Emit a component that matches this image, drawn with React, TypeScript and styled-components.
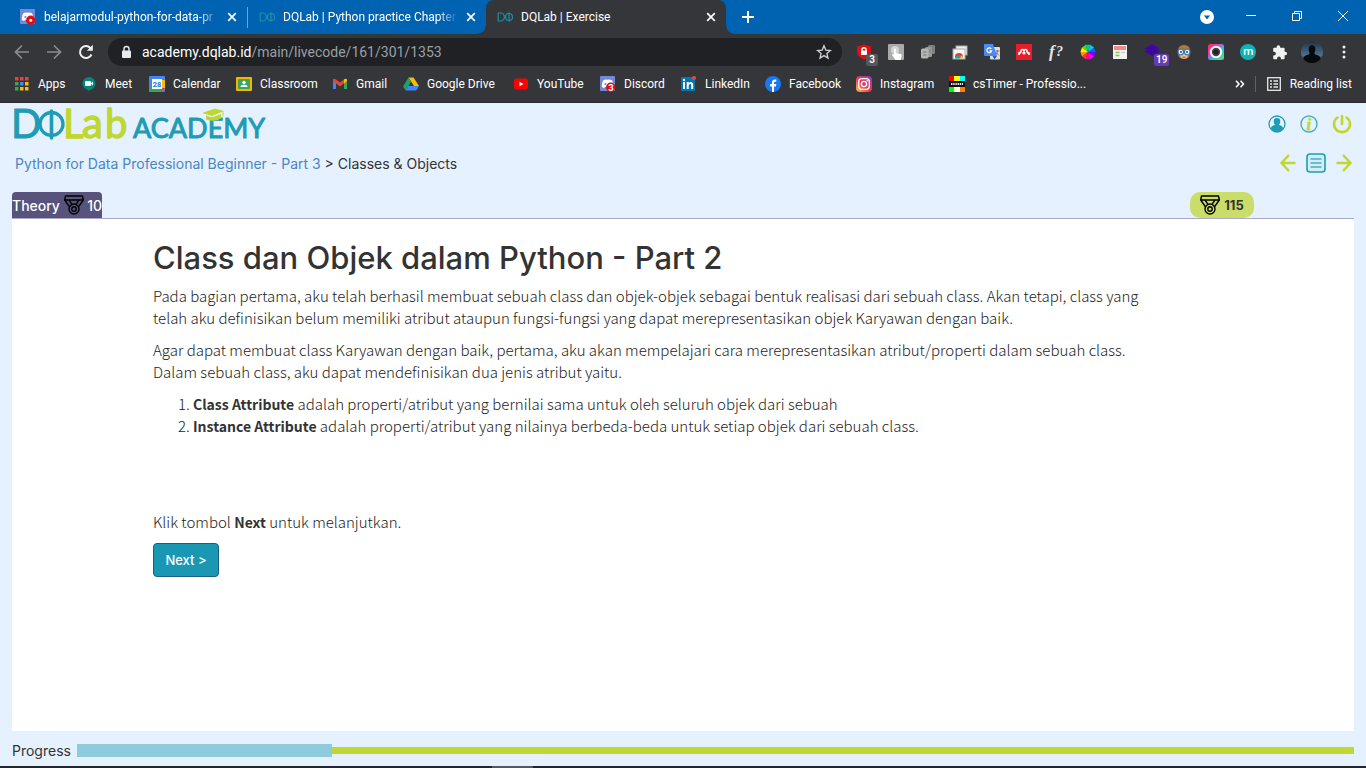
import React from "react";
import styled, { createGlobalStyle, css } from "styled-components";

const ui = `Roboto, "Open Sans", sans-serif`;
const display = `Inter, "Open Sans", sans-serif`;
const reading = `"Noto Sans CJK JP", "Noto Sans", sans-serif`;
const teal = "#1f9cb5";
const lime = "#c0d731";

const GlobalStyle = createGlobalStyle`
  *, *::before, *::after { box-sizing: border-box; }
  body { margin: 0; background: #e5f1ff; color: #333; font-family: ${display}; }
  button { font: inherit; color: inherit; background: none; border: 0; padding: 0; cursor: pointer; }
  a { color: inherit; text-decoration: none; }
  svg { display: block; flex: none; overflow: visible; }
`;

const Screen = styled.div`
  min-height: 100vh;
  display: flex;
  flex-direction: column;
`;

/* ---------- browser window ---------- */

const Browser = styled.header`
  background: #35363a;
  border-bottom: 1px solid #29292c;
  color: #fff;
  font-family: ${ui};
  font-size: 12px;
`;

const TabStrip = styled.div`
  height: 34px;
  display: flex;
  align-items: stretch;
  background: #0063b1;
`;

const Tab = styled.div<{ $active?: boolean; $first?: boolean }>`
  position: relative;
  flex: 0 1 ${(p) => (p.$first ? 248 : p.$active ? 240 : 238)}px;
  min-width: 0;
  display: flex;
  align-items: center;
  gap: 8px;
  padding: 0 10px 0 ${(p) => (p.$first ? 20 : 11)}px;
  ${(p) => p.$first && css`border-right: 1px solid transparent;
    border-image: linear-gradient(transparent 22%, #6ba4d2 22%, #6ba4d2 80%, transparent 80%) 1;`}
  ${(p) => p.$active && css`
    background: #35363a;
    border-radius: 8px 8px 0 0;
    &::before, &::after {
      content: "";
      position: absolute;
      bottom: 0;
      width: 8px;
      height: 8px;
    }
    &::before { left: -8px; background: radial-gradient(circle at 0 0, transparent 7px, #35363a 8px); }
    &::after { right: -8px; background: radial-gradient(circle at 100% 0, transparent 7px, #35363a 8px); }
  `}
`;

const TabTitle = styled.span<{ $fade?: boolean }>`
  flex: 1;
  min-width: 0;
  overflow: hidden;
  white-space: nowrap;
  ${(p) => p.$fade && css`mask-image: linear-gradient(to right, #000 88%, transparent);`}
`;

const IconButton = styled.button<{ $w?: number }>`
  flex: none;
  width: ${(p) => (p.$w ? `${p.$w}px` : "auto")};
  display: flex;
  align-items: center;
  justify-content: center;
`;

const WindowControls = styled.div`
  margin-left: auto;
  display: flex;
`;

const Toolbar = styled.div`
  height: 36px;
  display: flex;
  align-items: center;
  padding: 0 6px;
`;

const Address = styled.div`
  flex: 1;
  min-width: 0;
  height: 28px;
  margin: 0 6px;
  padding: 0 10px 0 12px;
  display: flex;
  align-items: center;
  gap: 10px;
  border-radius: 14px;
  background: #202124;
  font-size: 14px;
`;

const Url = styled.span`
  flex: 1;
  color: #9aa0a6;
  white-space: nowrap;
  overflow: hidden;
  b { font-weight: 400; color: #fff; }
`;

const Extension = styled(IconButton)`
  position: relative;
  width: 32px;
  height: 32px;
`;

const Count = styled.span<{ $bg: string }>`
  position: absolute;
  left: 18px;
  top: 18px;
  min-width: 12px;
  padding: 0 2px;
  border-radius: 2px;
  background: ${(p) => p.$bg};
  font-size: 10px;
  line-height: 12px;
  font-weight: 600;
`;

const Bookmarks = styled.nav`
  height: 32px;
  display: flex;
  align-items: center;
  padding: 0 14px 4px;
`;

const Bookmark = styled.a<{ $w: number }>`
  flex: 0 0 ${(p) => p.$w}px;
  display: flex;
  align-items: center;
  gap: 8px;
  white-space: nowrap;
`;

const BookmarkEnd = styled.div`
  margin-left: auto;
  display: flex;
  align-items: center;
  gap: 10px;
`;

const Divider = styled.span`
  width: 1px;
  height: 16px;
  background: #5f6165;
`;

const ListButton = styled(IconButton)`
  gap: 8px;
`;

/* ---------- page ---------- */

const Page = styled.div`
  flex: 1;
  display: flex;
  flex-direction: column;
  padding: 0 12px;
`;

const Row = styled.div<{ $h: number }>`
  height: ${(p) => p.$h}px;
  padding: 0 2px 0 3px;
  display: flex;
  align-items: center;
  justify-content: space-between;
`;

const Actions = styled.div<{ $gap: number }>`
  display: flex;
  align-items: center;
  gap: ${(p) => p.$gap}px;
`;

const Breadcrumb = styled.nav`
  font-size: 14px;
  font-weight: 400;
  color: #333;
  a { color: #4a86bf; }
`;

const TabsRow = styled.div`
  margin-top: 11px;
  height: 26px;
  display: flex;
  justify-content: space-between;
  padding-right: 100px;
`;

const TheoryTab = styled.button`
  width: 90px;
  display: flex;
  align-items: center;
  justify-content: space-between;
  border-radius: 4px 4px 0 0;
  background: #57537c;
  color: #fff;
  font-size: 14px;
  font-weight: 500;
`;

const Score = styled.div`
  width: 64px;
  display: flex;
  align-items: center;
  justify-content: center;
  gap: 4px;
  border-radius: 10px;
  background: #cbdd69;
  font-size: 13px;
  font-weight: 700;
`;

const Panel = styled.main`
  flex: 1;
  border-top: 1px solid #abaaca;
  background: #fff;
  padding: 22px 60px 40px 141px;
`;

const Article = styled.article`
  max-width: 1000px;
  color: #1c1c1c;
  font-family: ${reading};
  font-size: 15px;
  font-weight: 300;
  line-height: 22px;
  p, ol { margin: 0 0 10px; }
  ol { padding-left: 40px; margin-bottom: 74px; }
  b { font-size: 14px; font-weight: 700; color: #333; }
`;

const Title = styled.h1`
  margin: 0 0 10px;
  color: #333;
  font-family: ${display};
  font-size: 31px;
  line-height: 34px;
  font-weight: 500;
`;

const NextButton = styled.button`
  width: 66px;
  height: 34px;
  border: 1px solid #1d5c85;
  border-radius: 4px;
  background: #1a98b3;
  color: #fff;
  font-family: ${display};
  font-size: 13px;
  font-weight: 500;
`;

const Footer = styled.footer`
  height: 35px;
  padding-top: 4px;
  display: flex;
  align-items: center;
  gap: 5px;
  font-size: 14px;
`;

const ProgressLabel = styled.span`
  width: 60px;
`;

const Track = styled.div`
  flex: 1;
  height: 13px;
  background: linear-gradient(${lime}, ${lime}) center / 100% 7px no-repeat;
`;

const Fill = styled.div`
  height: 100%;
  background: #8ecbdc;
`;

const Taskbar = styled.div`
  height: 2px;
  background: linear-gradient(to right, #23262d 36%, #56585e 36%, #56585e 39%, #23262d 39%);
`;

/* ---------- drawings ---------- */

const Svg = ({ w = 16, h = w, vb = `0 0 ${w} ${h}`, children }: { w?: number; h?: number; vb?: string; children: React.ReactNode }) => (
  <svg width={w} height={h} viewBox={vb} fill="none" aria-hidden="true">{children}</svg>
);

const Close = () => (
  <Svg w={10}><path d="M1.2 1.2l7.6 7.6M8.8 1.2L1.2 8.8" stroke="#fff" strokeWidth="1.7" /></Svg>
);

const DiscordIcon = ({ count }: { count?: string }) => (
  <Svg>
    <rect x="0" y="0" width="15" height="15" rx="1" fill="#7289da" />
    <path d="M3 4.6Q5 3.2 7.2 3.7Q10 3 12.2 4.6Q13.8 8 13 11.2L10.5 12L9.5 11H5L4 12L1.8 11Q1.7 7.2 3 4.6z" fill="#fff" />
    <circle cx="5.4" cy="8" r="1.1" fill="#7289da" />
    <circle cx="10.7" cy="11.3" r="4.7" fill="#e00c14" />
    {count ? <text x="8.2" y="14.8" fontSize="9.5" fontWeight="700" fill="#fff" fontFamily="Roboto">{count}</text> : <circle cx="10.7" cy="11.3" r="1.5" fill="#fff" />}
  </Svg>
);

const LabFavicon = () => (
  <Svg>
    <path d="M1.2 4h2.2a4 4 0 0 1 0 8H1.2z" stroke="#1f8fa5" strokeWidth="1.2" />
    <circle cx="12" cy="8" r="3.5" stroke="#1f8fa5" strokeWidth="1.2" />
    <path d="M12 3.5v9" stroke="#1f8fa5" strokeWidth="1.2" />
  </Svg>
);

const Logo = () => (
  <svg width="252" height="36" viewBox="0 0 252 36" role="img" aria-label="DQLab Academy">
    <g fontFamily="Lato, sans-serif" fontSize="40" strokeLinejoin="round">
      <text x="-4" y="32" fill={teal} stroke={teal} strokeWidth="1">D</text>
      <text x="48" y="32" fill={lime} stroke={lime} strokeWidth="1.300">L</text>
      <text x="67" y="32" fill={lime} stroke={lime} strokeWidth="1.300" fontSize="42">a</text>
      <text x="90" y="32" fill={lime} stroke={lime} strokeWidth="1.300">b</text>
      <text x="118" y="32" fill={teal} stroke={teal} strokeWidth="1" fontSize="27">ACADEMY</text>
    </g>
    <circle cx="36.500" cy="18" r="11.500" fill="none" stroke={teal} strokeWidth="3.300" />
    <path d="M36.500 5v27" stroke={teal} strokeWidth="3.600" strokeLinecap="round" />
    <path d="M187 7l13-4.500 9 2.500-12 5z" fill={lime} />
    <path d="M191 9.500l6 2 9-3.500v4.500q-7 4-15 1z" fill={lime} />
    <path d="M208 5.500v5" stroke={lime} />
  </svg>
);

const Medal = () => (
  <Svg w={20}>
    <g stroke="#000" strokeWidth="1.4" strokeLinejoin="round">
      <path d="M1.500 1h17L19.300 5H.7z" />
      <path d="M.7 5l4.600 6.500M19.300 5l-4.600 6.500M5 5l3 4.300M15 5l-3 4.300" />
      <circle cx="10" cy="14" r="5" />
      <circle cx="10" cy="14" r="2.200" />
    </g>
  </Svg>
);

const bookmarks: { name: string; w: number; icon: React.ReactNode }[] = [
  { name: "Apps", w: 67, icon: <Svg>{[1, 6, 11].map((y, r) => [1, 6, 11].map((x, c) => <rect key={`${x}${y}`} x={x} y={y} width="3.500" height="3.500" fill={[["#ea4335", "#ea4335", "#ea4335"], ["#34a853", "#4285f4", "#fbbc05"], ["#34a853", "#fbbc05", "#fbbc05"]][r][c]} />))}</Svg> },
  { name: "Meet", w: 68, icon: <Svg><circle cx="8" cy="7.500" r="6.500" fill="#00897b" /><path d="M6 13l2.500 2.500V13z" fill="#00897b" /><rect x="4" y="5" width="6" height="5" rx="1" fill="#fff" /><path d="M9.500 7.500L12 5.500v4z" fill="#fff" /></Svg> },
  { name: "Calendar", w: 87, icon: <Svg><rect width="16" height="16" rx="1" fill="#4285f4" /><path d="M12 4h4v8h-4z" fill="#fbbc04" /><path d="M0 12h12v4H1a1 1 0 0 1-1-1z" fill="#34a853" /><path d="M12 12h4l-4 4z" fill="#ea4335" /><path d="M3 3h10v10H3z" fill="#fff" /><text x="3.800" y="11" fontSize="7.500" fontWeight="700" fill="#1a73e8" fontFamily="Roboto">28</text></Svg> },
  { name: "Classroom", w: 96, icon: <Svg><rect y="1" width="16" height="14" rx="1" fill="#f4b400" /><rect x="2" y="3" width="12" height="10" fill="#3fa45b" /><circle cx="8" cy="6.500" r="1.700" fill="#fff" /><path d="M4.500 11q0-2.300 3.500-2.300t3.500 2.300z" fill="#fff" /></Svg> },
  { name: "Gmail", w: 71, icon: <Svg><path d="M1 13V4l3 2.500V13z" fill="#4285f4" /><path d="M12 13V6.500L15 4v9z" fill="#34a853" /><path d="M1 5V3.500q1-1.500 2.700-.3L8 6.500l4.300-3.300Q14 2 15 3.500V5l-7 5.500z" fill="#ea4335" /><path d="M12 3.400q2-1.400 3 .1V5l-3 2.400z" fill="#fbbc04" /></Svg> },
  { name: "Google Drive", w: 110, icon: <Svg><path d="M5.500 1.500h5L16 10h-5z" fill="#fbbc04" /><path d="M5.500 1.500L8 5.800 2.800 14.500 0 10.500z" fill="#1ea362" /><path d="M5.300 10H16l-2.700 4.500H2.700z" fill="#4285f4" /></Svg> },
  { name: "YouTube", w: 87, icon: <Svg><rect x="1" y="2.500" width="14" height="11" rx="2.500" fill="#f00" /><path d="M6.500 5.700v4.600l4-2.300z" fill="#fff" /></Svg> },
  { name: "Discord", w: 81, icon: <DiscordIcon count="3" /> },
  { name: "LinkedIn", w: 84, icon: <Svg><rect y="1" width="14" height="14" fill="#0077b5" /><path d="M2 6h2v7H2zM5.700 6h2v1q2-2 4 0 .5.600.5 2v4h-2V9q-.5-2-2.500 0v4h-2z" fill="#fff" /><circle cx="3" cy="4" r="1.200" fill="#fff" /><circle cx="13" cy="2" r="2" fill="#e8483f" /></Svg> },
  { name: "Facebook", w: 91, icon: <Svg><circle cx="8" cy="8" r="8" fill="#1877f2" /><path d="M7 16v-5.500H5V8h2V6.500Q7 3.500 10 3.500h1.300v2.200H10Q9 5.700 9 7v1h2.300l-.4 2.500H9V16z" fill="#fff" /></Svg> },
  { name: "Instagram", w: 93, icon: <Svg><defs><linearGradient id="insta" x1="0" y1="1" x2="1" y2="0"><stop offset="0" stopColor="#ffc24b" /><stop offset=".45" stopColor="#ee3a4e" /><stop offset="1" stopColor="#8a3ac8" /></linearGradient></defs><rect width="16" height="16" rx="4" fill="url(#insta)" /><rect x="2.700" y="2.700" width="10.600" height="10.600" rx="3" stroke="#fff" strokeWidth="1.300" /><circle cx="8" cy="8" r="2.600" stroke="#fff" strokeWidth="1.300" /><circle cx="11.200" cy="4.800" r=".8" fill="#fff" /></Svg> },
  { name: "csTimer - Professio...", w: 136, icon: <Svg><path d="M0 0h5v5H0z" fill="red" /><path d="M5 0h6v5H5z" fill="#ff0" /><path d="M11 0h5v5h-5z" fill="#0ff" /><path d="M0 5h16v6H0z" fill="#111" /><path d="M2 8h12" stroke="#ddd" strokeWidth="2" strokeDasharray="1.500 .7" /><path d="M0 11h5v5H0z" fill="#0f0" /><path d="M5 11h6v5H5z" fill="#ffffd8" /><path d="M11 11h5v5h-5z" fill="#ff7f00" /></Svg> },
];

const wheel = ["#06f", "#0cf", "#0c8", "#4d2", "#fe0", "#f90", "#f33", "#f08", "#f0f", "#70f"];

const extensions: { name: string; icon: React.ReactNode; count?: string; bg?: string }[] = [
  { name: "Ad blocker", count: "3", bg: "#55575b", icon: <Svg><path d="M1 2.200Q5 2 8 .5q3 1.500 7 1.700v5q0 5.800-7 8.300-7-2.500-7-8.300z" fill="#e01010" /><rect x="5" y="6.500" width="6" height="4.500" fill="#fff" /><path d="M6 7V5q2-2.500 4 0v2" stroke="#fff" strokeWidth="1.300" /></Svg> },
  { name: "Touch", icon: <Svg><rect width="16" height="16" rx="1" fill="#aaa" /><circle cx="7" cy="6" r="4" fill="#d5d5d5" /><path d="M6 5q1-1.500 2 0v4l5 1q1 .5.500 3l-1 3H7.500L4 11q0-1.500 2-.5z" fill="#fff" /></Svg> },
  { name: "Copy", icon: <Svg><rect x="8" y="1" width="7" height="9" rx="1.500" fill="#808080" /><rect x="5" y="3" width="7" height="10" rx="1.500" fill="#999" /><rect x="1" y="4.500" width="7.500" height="10" rx="1.500" fill="#b5b5b5" /><path d="M3 8h3.500M3 11h3.500M10 5.500v3M12.500 3v4" stroke="#777" /></Svg> },
  { name: "Windows", icon: <Svg><rect x="4" y="2" width="11" height="9" fill="#eee" stroke="#aaa" /><rect x="1" y="5" width="12" height="10" fill="#f7f7f7" stroke="#aaa" /><path d="M3 13a4 4 0 0 1 8 0z" fill="#e33b2e" /><path d="M3 14.500q0-3 2.500-3L7 14.500z" fill="#36a852" /><path d="M11 14.500q0-3-2-3L7 14.500z" fill="#fbc116" /><circle cx="7" cy="12.800" r="1.700" fill="#4285f4" /></Svg> },
  { name: "Translate", icon: <Svg><rect x="6" y="3" width="10" height="12.500" rx="1" fill="#ddd" /><path d="M0 0h9l4 12H1a1 1 0 0 1-1-1z" fill="#4a8af4" /><path d="M8.500 12h4.500l-2.500 3.500z" fill="#2f5fc0" /><path d="M7.200 4.800a2.400 2.400 0 1 0 .4 2H5.500" stroke="#fff" strokeWidth="1.200" /><path d="M11.500 7h4M13.500 6v1q0 2.500-2 4M12 8.500l3 3" stroke="#777" /></Svg> },
  { name: "Mendeley", icon: <Svg><rect width="16" height="16" fill="#e81c2a" /><path d="M3 11V9q2 0 2-2 0-1.500 1.500-1.500T8 7.500Q8 5.500 9.500 5.500T11 7q0 2 2 2v2" stroke="#fff" strokeWidth="1.700" /><circle cx="8" cy="9" r="1.600" fill="#fff" /></Svg> },
  { name: "Fonts", icon: <Svg w={18} h={18}><g fontStyle="italic" fontWeight="700" fill="#e4e4e4" fontFamily="Liberation Serif"><text x="2" y="14" fontSize="17">f</text><text x="9" y="13" fontSize="14">?</text></g></Svg> },
  { name: "Colours", icon: <Svg>{wheel.map((c, i) => { const a = (i * Math.PI) / 5, b = ((i + 1) * Math.PI) / 5; return <path key={c} fill={c} d={`M8 8L${8 + 7.5 * Math.cos(a)} ${8 - 7.5 * Math.sin(a)}L${8 + 7.5 * Math.cos(b)} ${8 - 7.5 * Math.sin(b)}z`} />; })}</Svg> },
  { name: "Reader", icon: <Svg><rect x="1" y="1" width="14" height="14" fill="#f2f2f2" /><rect x="2" y="2" width="12" height="4" fill="#f08a86" /><path d="M3.500 8.500h4M3.500 11.500h4" stroke="#8cc152" strokeWidth="1.300" /><path d="M9 8.500h4" stroke="#ccc" strokeWidth="1.300" /></Svg> },
  { name: "Layers", count: "19", bg: "#673ab7", icon: <Svg><path d="M8 0l7.500 4.500L8 9 .5 4.500z" fill="#4a00b4" /><path d="M.5 7.500L8 3l7.500 4.500L8 12z" fill="#3a0a96" /></Svg> },
  { name: "Goggles", icon: <Svg><path d="M2 9Q1 1 8 1t6 8q0 6-6 6T2 9z" fill="#b5763a" /><path d="M3.500 9h9Q12 14.500 8 14.500T3.500 9z" fill="#f3c795" /><path d="M1 7.500h14" stroke="#222" /><circle cx="4.800" cy="8" r="2.800" fill="#fff" stroke="#2f7fc9" strokeWidth="1.300" /><circle cx="11.200" cy="8" r="2.800" fill="#fff" stroke="#2f7fc9" strokeWidth="1.300" /><circle cx="5" cy="8" r=".9" fill="#222" /><circle cx="11" cy="8" r=".9" fill="#222" /><path d="M6.500 13h3" stroke="#d33" /></Svg> },
  { name: "Camera", icon: <Svg><defs><linearGradient id="lens" x1="0" y1="0" x2="1" y2="1"><stop offset="0" stopColor="#f33c3c" /><stop offset=".3" stopColor="#ff2bb0" /><stop offset=".6" stopColor="#20c0f0" /><stop offset="1" stopColor="#6be34f" /></linearGradient></defs><rect width="16" height="16" rx="2.500" fill="url(#lens)" /><circle cx="8" cy="8" r="5.200" fill="#444" stroke="#fff" strokeWidth="2" /><circle cx="8" cy="8" r="2.500" fill="#222" /></Svg> },
  { name: "Momentum", icon: <Svg><circle cx="8" cy="8" r="8" fill="#0fb5b5" /><text x="3" y="11" fontSize="11" fontWeight="600" fill="#fff" fontFamily="Open Sans">m</text></Svg> },
  { name: "Extensions", icon: <Svg><path d="M6.400 1.200a1.800 1.800 0 0 1 1.800 1.800v.7h3.400q1 0 1 1v3h.7a1.800 1.800 0 0 1 0 3.600h-.7v3q0 1-1 1H8.900v-.9a1.900 1.900 0 0 0-3.800 0v.9H2.200q-1 0-1-1v-2.800h.8a1.900 1.900 0 0 0 0-3.800h-.8v-3q0-1 1-1h2.400V3a1.800 1.800 0 0 1 1.800-1.800z" fill="#f1f1f1" /></Svg> },
  { name: "Profile", icon: <Svg w={22}><defs><linearGradient id="sky" x1="0" y1="0" x2="0" y2="1"><stop offset="0" stopColor="#1c3346" /><stop offset=".65" stopColor="#4d7088" /><stop offset="1" stopColor="#14212d" /></linearGradient><clipPath id="face"><circle cx="11" cy="11" r="11" /></clipPath></defs><g clipPath="url(#face)"><path d="M0 0h22v22H0z" fill="url(#sky)" /><ellipse cx="11" cy="8.500" rx="3.300" ry="4.200" fill="#07090d" /><path d="M2 22v-4q1-4 6-4.500l1-2h4l1 2q5 .5 6 4.500v4z" fill="#07090d" /></g></Svg> },
];

export default function App() {
  return (
    <Screen>
      <GlobalStyle />
      <Browser>
        <TabStrip>
          <Tab $first>
            <DiscordIcon /><TabTitle $fade>belajarmodul-python-for-data-pr</TabTitle>
            <IconButton aria-label="Close tab"><Close /></IconButton>
          </Tab>
          <Tab>
            <LabFavicon /><TabTitle $fade>DQLab | Python practice Chapter</TabTitle>
            <IconButton aria-label="Close tab"><Close /></IconButton>
          </Tab>
          <Tab $active>
            <LabFavicon /><TabTitle>DQLab | Exercise</TabTitle>
            <IconButton aria-label="Close tab"><Close /></IconButton>
          </Tab>
          <IconButton $w={44} aria-label="New tab"><Svg w={12}><path d="M6 0v12M0 6h12" stroke="#fff" strokeWidth="2" /></Svg></IconButton>
          <WindowControls>
            <IconButton $w={42} aria-label="Search tabs"><Svg w={14}><circle cx="7" cy="7" r="7" fill="#fff" /><path d="M4 5.500h6L7 9.500z" fill="#0063b1" /></Svg></IconButton>
            <IconButton $w={46} aria-label="Minimize"><Svg w={10}><path d="M0 3.500h10" stroke="#fff" /></Svg></IconButton>
            <IconButton $w={46} aria-label="Restore"><Svg w={10} h={14}><path d="M.5 3.500h7v7h-7zM2.500 3.500v-2h7v7h-2" stroke="#fff" /></Svg></IconButton>
            <IconButton $w={46} aria-label="Close window"><Svg w={10} h={14}><path d="M0 1l10 10M10 1L0 11" stroke="#fff" /></Svg></IconButton>
          </WindowControls>
        </TabStrip>
        <Toolbar>
          <IconButton $w={32} aria-label="Back"><Svg><path d="M15 8H2M8 1.500L1.500 8 8 14.500" stroke="#8b8c8f" strokeWidth="1.700" /></Svg></IconButton>
          <IconButton $w={32} aria-label="Forward"><Svg><path d="M1 8h13M8 1.500L14.500 8 8 14.500" stroke="#8b8c8f" strokeWidth="1.700" /></Svg></IconButton>
          <IconButton $w={32} aria-label="Reload"><Svg><path d="M13.500 10.500a6 6 0 1 1-1.200-6.600" stroke="#f1f1f1" strokeWidth="2" /><path d="M14.800.8v6H8.800z" fill="#f1f1f1" /></Svg></IconButton>
          <Address role="textbox" aria-label="Address">
            <Svg w={12} h={14}><rect x="2" y="5.500" width="9" height="7.500" rx="1" fill="#e8eaed" /><path d="M4 6V4a2.500 2.500 0 0 1 5 0v2" stroke="#e8eaed" strokeWidth="1.400" /></Svg>
            <Url><b>academy.dqlab.id</b>/main/livecode/161/301/1353</Url>
            <IconButton aria-label="Bookmark this page"><Svg><path d="M8 1.800l1.800 4.300 4.600.4-3.500 3 1.100 4.600L8 11.600l-4 2.500 1.100-4.600-3.500-3 4.600-.4z" stroke="#d0d1d3" strokeWidth="1.300" /></Svg></IconButton>
          </Address>
          {extensions.map((e) => (
            <Extension key={e.name} aria-label={e.name}>
              {e.icon}
              {e.count && <Count $bg={e.bg!}>{e.count}</Count>}
            </Extension>
          ))}
          <IconButton $w={32} aria-label="Menu"><Svg w={4} h={16}><circle cx="2" cy="3" r="1.500" fill="#eee" /><circle cx="2" cy="8" r="1.500" fill="#eee" /><circle cx="2" cy="13" r="1.500" fill="#eee" /></Svg></IconButton>
        </Toolbar>
        <Bookmarks aria-label="Bookmarks">
          {bookmarks.map((b) => <Bookmark key={b.name} href="#" $w={b.w}>{b.icon}{b.name}</Bookmark>)}
          <BookmarkEnd>
            <IconButton aria-label="More bookmarks"><Svg w={10} h={8}><path d="M1 .8L4 4 1 7.200M5.500.8L8.500 4l-3 3.200" stroke="#fff" strokeWidth="1.500" /></Svg></IconButton>
            <Divider />
            <ListButton><Svg><rect x="1.700" y="1.700" width="12.600" height="12.600" stroke="#e8e8e8" strokeWidth="1.300" /><path d="M4 5h2M4 8h2M4 11h2M7.500 5H12M7.500 8H12M7.500 11H12" stroke="#e8e8e8" strokeWidth="1.700" /></Svg>Reading list</ListButton>
          </BookmarkEnd>
        </Bookmarks>
      </Browser>

      <Page>
        <Row $h={42}>
          <a href="#"><Logo /></a>
          <Actions $gap={14}>
            <IconButton aria-label="Account"><Svg w={18}><circle cx="9" cy="9" r="8" stroke={teal} strokeWidth="1.300" /><path d="M9 3q3.300 0 3.300 3.300 0 2-1.300 3.700 3.800.8 4.200 3.500Q12.500 17 9 17t-6.200-3.500Q3.200 10.800 7 10 5.700 8.300 5.700 6.300 5.700 3 9 3z" fill={teal} /></Svg></IconButton>
            <IconButton aria-label="Information"><Svg w={18}><circle cx="9" cy="9" r="8" stroke="#46aec2" strokeWidth="1.400" /><text x="6.500" y="14.500" fontSize="17" fontWeight="700" fontStyle="italic" fontFamily="Liberation Serif" fill={lime} stroke={lime} strokeWidth="0.500">i</text></Svg></IconButton>
            <IconButton aria-label="Log out"><Svg w={20}><path d="M5.500 3.500a8 8 0 1 0 9 0" stroke={lime} strokeWidth="2.600" strokeLinecap="round" /><path d="M10 2v8" stroke={lime} strokeWidth="2.600" strokeLinecap="round" /></Svg></IconButton>
          </Actions>
        </Row>
        <Row $h={36}>
          <Breadcrumb><a href="#">Python for Data Professional Beginner - Part 3</a> &gt; Classes &amp; Objects</Breadcrumb>
          <Actions $gap={10}>
            <IconButton aria-label="Previous"><Svg w={16} h={18}><path d="M15.500 9H2M9 1L1.500 9 9 17" stroke={lime} strokeWidth="2.500" /></Svg></IconButton>
            <IconButton aria-label="Contents"><Svg w={20}><rect x="1" y="1" width="18" height="18" rx="3" fill="#d3edf5" stroke={teal} strokeWidth="1.600" /><path d="M4.500 6h11M4.500 10h11M4.500 14h11" stroke="#46aec2" strokeWidth="1.500" /></Svg></IconButton>
            <IconButton aria-label="Following"><Svg w={16} h={18}><path d="M.5 9H14M7 1l7.500 8L7 17" stroke={lime} strokeWidth="2.500" /></Svg></IconButton>
          </Actions>
        </Row>
        <TabsRow>
          <TheoryTab><span>Theory</span><Medal /><span>10</span></TheoryTab>
          <Score><Medal />115</Score>
        </TabsRow>
        <Panel>
          <Article>
            <Title>Class dan Objek dalam Python - Part 2</Title>
            <p>Pada bagian pertama, aku telah berhasil membuat sebuah class dan objek-objek sebagai bentuk realisasi dari sebuah class. Akan tetapi, class yang telah aku definisikan belum memiliki atribut ataupun fungsi-fungsi yang dapat merepresentasikan objek Karyawan dengan baik.</p>
            <p>Agar dapat membuat class Karyawan dengan baik, pertama, aku akan mempelajari cara merepresentasikan atribut/properti dalam sebuah class. Dalam sebuah class, aku dapat mendefinisikan dua jenis atribut yaitu.</p>
            <ol>
              <li><b>Class Attribute</b> adalah properti/atribut yang bernilai sama untuk oleh seluruh objek dari sebuah</li>
              <li><b>Instance Attribute</b> adalah properti/atribut yang nilainya berbeda-beda untuk setiap objek dari sebuah class.</li>
            </ol>
            <p>Klik tombol <b>Next</b> untuk melanjutkan.</p>
            <NextButton>Next &gt;</NextButton>
          </Article>
        </Panel>
        <Footer>
          <ProgressLabel id="progress-label">Progress</ProgressLabel>
          <Track role="progressbar" aria-labelledby="progress-label" aria-valuenow={20} aria-valuemin={0} aria-valuemax={100}>
            <Fill style={{ width: "20%" }} />
          </Track>
        </Footer>
      </Page>
      <Taskbar />
    </Screen>
  );
}
